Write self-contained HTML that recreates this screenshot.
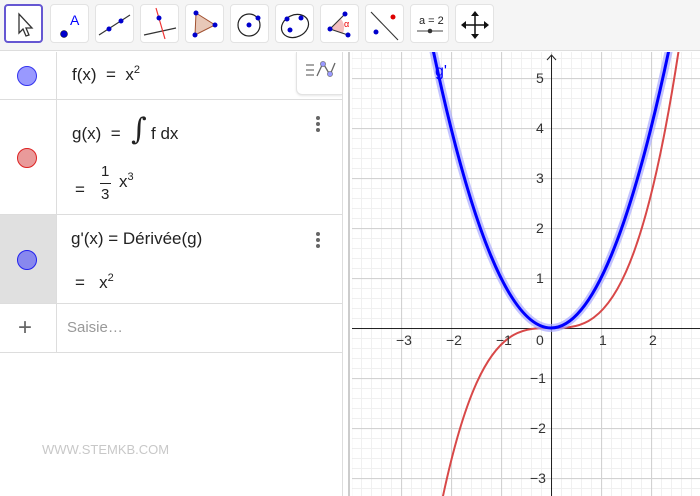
<!DOCTYPE html>
<html style="overflow:hidden;width:700px;height:496px"><head><meta charset="utf-8"><style>
*{margin:0;padding:0;box-sizing:border-box}
body{width:700px;height:496px;overflow:hidden;background:#fff;font-family:"Liberation Sans","DejaVu Sans",sans-serif;position:relative;color:#333}
.tb{position:absolute;left:0;top:0;width:700px;height:51px;background:#f5f5f5;border-bottom:1px solid #ddd}
.btn{position:absolute;top:4px;width:39px;height:39px;background:#fff;border:1px solid #e3e3e3;border-radius:4px}
.btn svg{position:absolute;left:0;top:0}
.sel{border:2px solid #6557d2}
.av{position:absolute;left:0;top:52px;width:343px;height:444px;background:#fff;border-right:1px solid #ddd;overflow:hidden}
.row{position:absolute;left:0;width:342px;border-bottom:1px solid #ddd}
.lc{position:absolute;left:0;top:0;bottom:0;width:57px;border-right:1px solid #ddd}
.dot{position:absolute;left:17px;width:20px;height:20px;border-radius:50%}
.t{position:absolute;font-size:17px;color:#222;white-space:nowrap;line-height:1.2}
.menu{position:absolute;left:316px;width:4px}
.menu i{display:block;width:4px;height:4px;border-radius:50%;background:#666;margin-bottom:2px}
.strip{position:absolute;left:343px;top:52px;width:7px;height:444px;background:#fff;border-right:2px solid #ccc}
sup{font-size:11px;vertical-align:7px;line-height:0}
.gw{position:absolute;left:0;top:0;width:700px;height:496px;overflow:hidden;pointer-events:none}
</style></head><body>
<div class="tb">
<div class="btn sel" style="left:4px"><svg width="36" height="36"><path d="M13 8 L13 27 L17 23 L20 30 L23 29 L20 22 L26 22 Z" fill="#fff" stroke="#333" stroke-width="1.3"/></svg></div>
<div class="btn" style="left:50px"><svg width="38" height="38"><circle cx="13" cy="29" r="3.5" fill="#00c" stroke="#000" stroke-width=".5"/><text x="19" y="20" font-size="14" fill="#00f" font-family="Liberation Sans">A</text></svg></div>
<div class="btn" style="left:95px"><svg width="38" height="38"><path d="M3 30 L34 10" stroke="#333" stroke-width="1.2"/><circle cx="13" cy="24" r="2.5" fill="#00c"/><circle cx="25" cy="16" r="2.5" fill="#00c"/></svg></div>
<div class="btn" style="left:140px"><svg width="38" height="38"><path d="M3 30 L35 23" stroke="#333" stroke-width="1.2"/><path d="M15 3 L24 34" stroke="#e33" stroke-width="1.2"/><circle cx="18" cy="13" r="2.5" fill="#00c"/></svg></div>
<div class="btn" style="left:185px"><svg width="38" height="38"><path d="M10 8 L29 20 L9 30 Z" fill="#e8c8b8" stroke="#a05030" stroke-width="1"/><circle cx="10" cy="8" r="2.5" fill="#00c"/><circle cx="29" cy="20" r="2.5" fill="#00c"/><circle cx="9" cy="30" r="2.5" fill="#00c"/></svg></div>
<div class="btn" style="left:230px"><svg width="38" height="38"><circle cx="18" cy="20" r="11" fill="none" stroke="#222" stroke-width="1.2"/><circle cx="18" cy="20" r="2.5" fill="#00c"/><circle cx="27" cy="13" r="2.5" fill="#00c"/></svg></div>
<div class="btn" style="left:275px"><svg width="38" height="38"><ellipse cx="19" cy="21" rx="14" ry="11" fill="none" stroke="#222" stroke-width="1.2" transform="rotate(-25 19 21)"/><circle cx="11" cy="14" r="2.5" fill="#00c"/><circle cx="25" cy="13" r="2.5" fill="#00c"/><circle cx="14" cy="25" r="2.5" fill="#00c"/></svg></div>
<div class="btn" style="left:320px"><svg width="38" height="38"><path d="M9 24 L20 14 A14 14 0 0 1 22 28 Z" fill="#f4c0c0"/><path d="M24 9 L9 24 L27 30" fill="none" stroke="#333" stroke-width="1.1"/><circle cx="24" cy="9" r="2.5" fill="#00c"/><circle cx="9" cy="24" r="2.5" fill="#00c"/><circle cx="27" cy="30" r="2.5" fill="#00c"/><text x="23" y="22" font-size="9" fill="#e00">α</text></svg></div>
<div class="btn" style="left:365px"><svg width="38" height="38"><path d="M5 7 L32 35" stroke="#333" stroke-width="1.1"/><circle cx="27" cy="12" r="2.5" fill="#d00"/><circle cx="10" cy="27" r="2.5" fill="#00c"/></svg></div>
<div class="btn" style="left:410px"><svg width="38" height="38"><text x="8" y="19" font-size="11" fill="#222" font-family="Liberation Sans">a = 2</text><path d="M6 26 L32 26" stroke="#444" stroke-width="1"/><circle cx="19" cy="26" r="2.3" fill="#333"/></svg></div>
<div class="btn" style="left:455px"><svg width="38" height="38"><path d="M19 9 L19 31 M8 20 L30 20" stroke="#111" stroke-width="1.5"/><path d="M19 6 L15 11 L23 11 Z M19 34 L15 29 L23 29 Z M5 20 L10 16 L10 24 Z M33 20 L28 16 L28 24 Z" fill="#111"/></svg></div>
</div>

<div class="av">
<div class="row" style="top:0;height:48px"><div class="lc"></div><div class="dot" style="top:14px;background:#9999ff;border:1px solid #3333ee"></div><div class="t" style="left:72px;top:13px">f(x) &nbsp;= &nbsp;x<sup>2</sup></div></div>
<div class="row" style="top:48px;height:115px"><div class="lc"></div><div class="dot" style="top:48px;background:#e99a9a;border:1px solid #d22"></div>
<div class="t" style="left:72px;top:24px">g(x) &nbsp;= </div><div class="t" style="left:131px;top:12px;font-size:30px;font-style:italic;font-family:'DejaVu Serif',serif;line-height:1.2">∫</div><div class="t" style="left:151px;top:24px">f dx</div>
<div class="t" style="left:75px;top:80px">=</div><div class="t" style="left:101px;top:63px;font-size:15px">1</div><div style="position:absolute;left:100px;top:83px;width:11px;border-top:1px solid #222"></div><div class="t" style="left:101px;top:86px;font-size:15px">3</div><div class="t" style="left:119px;top:72px">x<sup>3</sup></div>
<div class="menu" style="top:16px"><i></i><i></i><i></i></div></div>
<div class="row" style="top:163px;height:89px"><div class="lc" style="background:#e0e0e0"></div><div class="dot" style="top:35px;background:#8888ee;border:1px solid #22e"></div>
<div class="t" style="left:71px;top:14px">g'(x) = Dérivée(g)</div><div class="t" style="left:75px;top:58px">= &nbsp;&nbsp;x<sup>2</sup></div>
<div class="menu" style="top:17px"><i></i><i></i><i></i></div></div>
<div class="row" style="top:252px;height:49px"><div class="lc"></div><div class="t" style="left:18px;top:10px;font-size:24px;color:#666;font-weight:300">+</div><div class="t" style="left:67px;top:15px;color:#999;font-size:15px">Saisie…</div></div>
<div class="t" style="left:42px;top:390px;font-size:13px;color:#c8c8c8">WWW.STEMKB.COM</div>
<div style="position:absolute;left:296px;top:0;width:46px;height:43px;background:#fff;border-left:1px solid #e3e3e3;border-bottom:1px solid #e3e3e3;border-radius:0 0 0 6px;box-shadow:0 1px 2px rgba(0,0,0,.1)"><svg width="46" height="43"><path d="M9 13h8M9 18h8M9 23h8" stroke="#888" stroke-width="1.6"/><path d="M20 24 L26 11 L33 23 L38 11" fill="none" stroke="#666" stroke-width="1.3"/><circle cx="26" cy="12" r="2.6" fill="#99f" stroke="#666" stroke-width=".6"/><circle cx="33" cy="22" r="2.6" fill="#99f" stroke="#666" stroke-width=".6"/></svg></div>
</div>
<div class="strip"></div>

<div class="gw">
<svg style="display:block" width="700" height="496" viewBox="0 0 700 496" overflow="hidden">
<defs>
<pattern id="mi" x="1" y="8" width="10" height="10" patternUnits="userSpaceOnUse"><path d="M0.5 0V10M0 0.5H10" stroke="#f0f0f0" stroke-width="1"/></pattern>
<pattern id="ma" x="1" y="28" width="50" height="50" patternUnits="userSpaceOnUse"><path d="M0.5 0V50M0 0.5H50" stroke="#d2d2d2" stroke-width="1.2"/></pattern>
<clipPath id="c"><rect x="352" y="52" width="348" height="444"/></clipPath>
</defs>
<g clip-path="url(#c)">
<rect x="352" y="52" width="348" height="444" fill="url(#mi)"/>
<rect x="352" y="52" width="348" height="444" fill="url(#ma)"/>
<path d="M352 328.5H700" stroke="#222" stroke-width="1"/>
<path d="M551.5 496V56" stroke="#222" stroke-width="1"/>
<path d="M547 60 L551.5 55 L556 60" fill="none" stroke="#222" stroke-width="1"/>
<path d="M401 778 C501 -122 601 778 701 -122" fill="none" stroke="#d84848" stroke-width="2"/>
<path d="M431 40 Q551 616 671 40" fill="none" stroke="#aaaaff" stroke-opacity=".7" stroke-width="8"/>
<path d="M431 40 Q551 616 671 40" fill="none" stroke="#0000ff" stroke-width="3"/>
<g font-family="Liberation Sans,DejaVu Sans,sans-serif" font-size="14" fill="#333">
<text x="396" y="345">−3</text><text x="446" y="345">−2</text><text x="496" y="345">−1</text><text x="536" y="345">0</text><text x="599" y="345">1</text><text x="649" y="345">2</text>
<text x="536" y="83">5</text><text x="536" y="133">4</text><text x="536" y="183">3</text><text x="536" y="233">2</text><text x="536" y="283">1</text>
<text x="530" y="383">−1</text><text x="530" y="433">−2</text><text x="530" y="483">−3</text>
<text x="435" y="76" font-size="16" fill="#0000ff">g'</text>
</g>
</g>
</svg>
</div>
</body></html>
